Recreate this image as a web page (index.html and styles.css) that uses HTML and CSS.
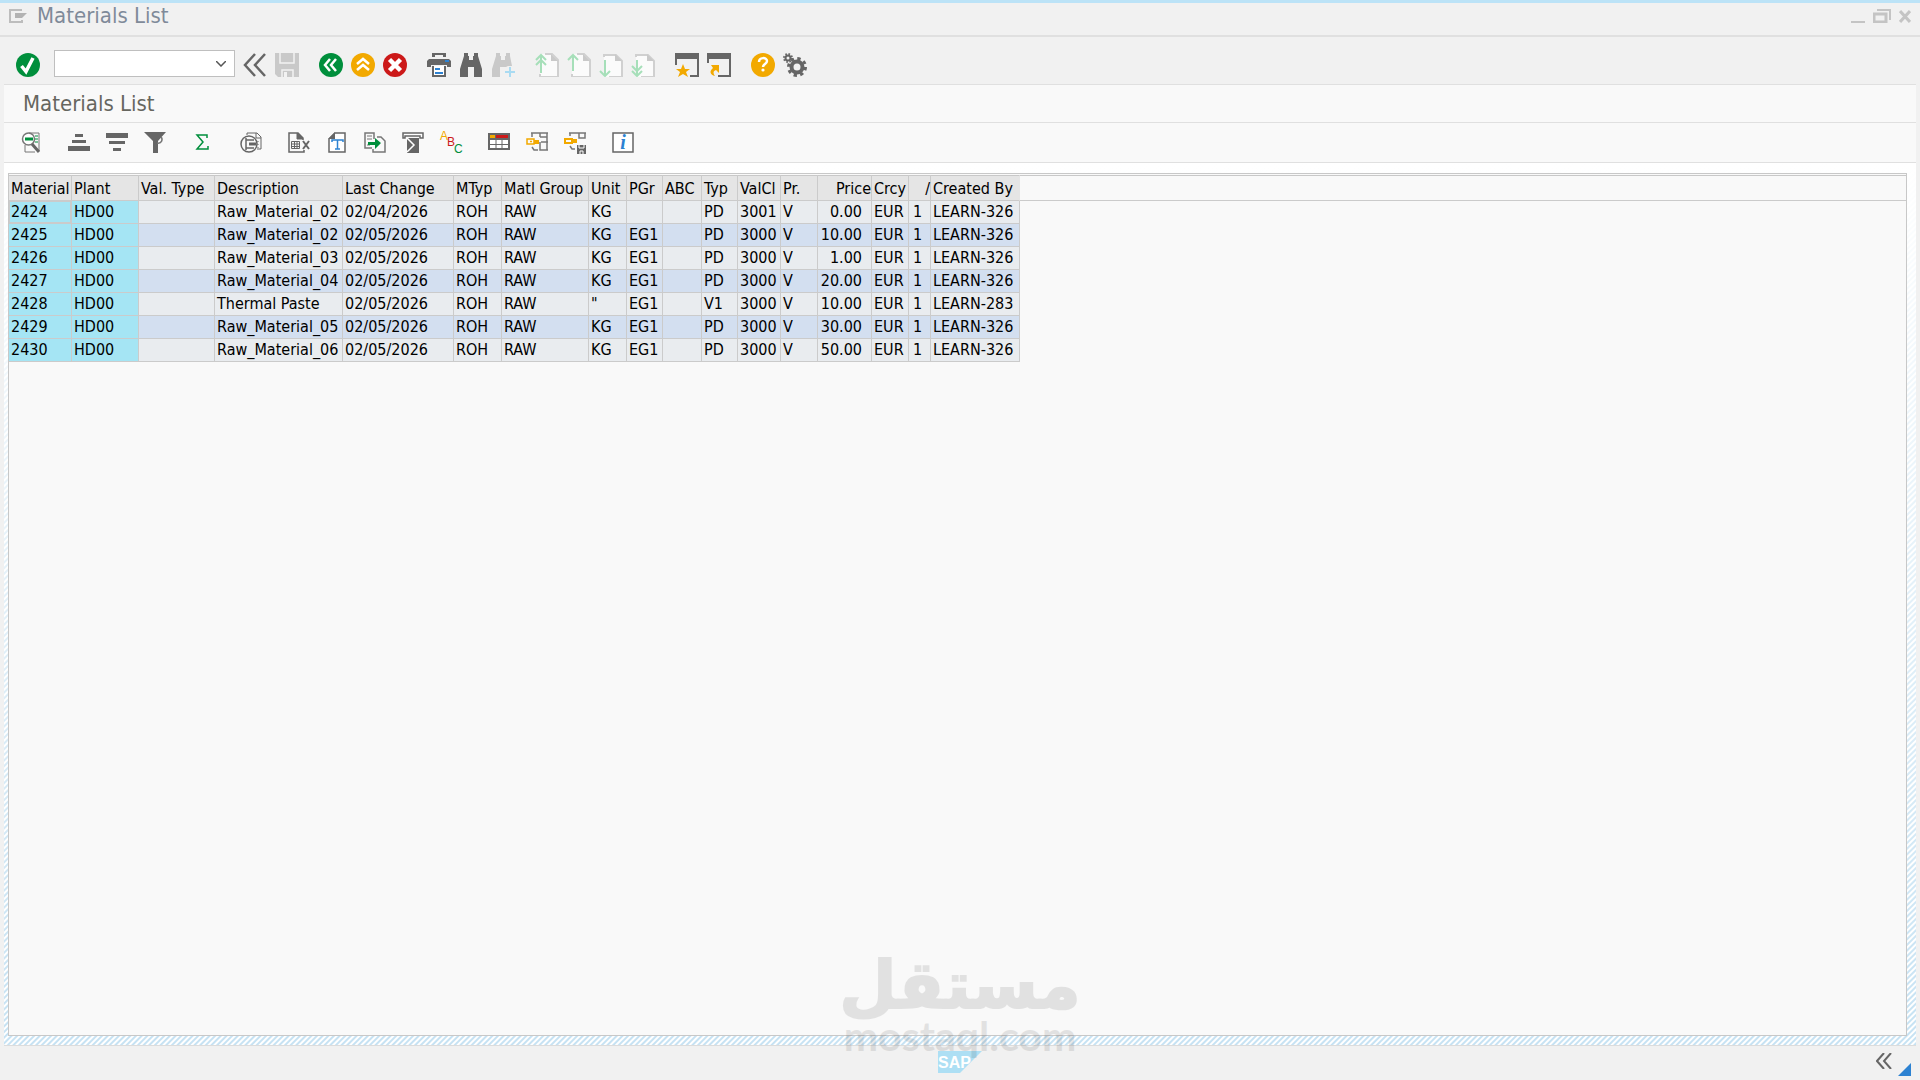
FILE: index.html
```html
<!DOCTYPE html>
<html lang="en">
<head>
    <meta charset="UTF-8">
    <meta name="viewport" content="width=device-width, initial-scale=1.0">
    <title>Materials List</title>
    <link rel="stylesheet" href="styles.css">
</head>
<body>
    <!-- Title Bar -->
    <header class="titlebar">
        <button class="icon-btn" aria-label="Menu">
            <svg width="18" height="14" viewBox="0 0 18 14"><path d="M13 1H1v12h12v-2" fill="none" stroke="#bdbdbd" stroke-width="2"/><path d="M6 4h12l-5 5H6z" fill="#b3b3b3"/></svg>
        </button>
        <span class="window-title">Materials List</span>
        <div class="window-controls">
            <button class="icon-btn" aria-label="Minimize">
                <svg width="14" height="14" viewBox="0 0 14 14"><path d="M0 13h14" stroke="#c4c4c4" stroke-width="2"/></svg>
            </button>
            <button class="icon-btn" aria-label="Restore">
                <svg width="18" height="14" viewBox="0 0 18 14" fill="none" stroke="#c4c4c4" stroke-width="2"><path d="M1 5h12v8H1z" stroke-width="3"/><path d="M4 1h13v10"/></svg>
            </button>
            <button class="icon-btn" aria-label="Close">
                <svg width="12" height="14" viewBox="0 0 12 14"><path d="M1 2l10 11M11 2L1 13" stroke="#c4c4c4" stroke-width="3"/></svg>
            </button>
        </div>
    </header>

    <!-- System Toolbar -->
    <div class="system-bar">
        <button class="icon-btn" aria-label="Enter">
            <svg width="24" height="24" viewBox="0 0 24 24"><circle cx="12" cy="12" r="12" fill="#008f3c"/><path d="M5.500 13l4.500 5.500L17 5" fill="none" stroke="#fff" stroke-width="3.500"/></svg>
        </button>
        <div class="command">
            <input type="text" aria-label="Command">
            <svg width="10" height="6" viewBox="0 0 10 6"><path d="M0 0l5 5 5-5" fill="none" stroke="#555" stroke-width="1.500"/></svg>
        </div>
        <div class="group">
            <button class="icon-btn" aria-label="Collapse">
                <svg width="24" height="24" viewBox="0 0 24 24"><path d="M12 1L2 12l10 11M22 1L12 12l10 11" fill="none" stroke="#666" stroke-width="2.500"/></svg>
            </button>
            <button class="icon-btn" aria-label="Save" disabled>
                <svg width="24" height="24" viewBox="0 0 24 24"><path d="M0 0h24v24H3l-3-3z" fill="#c9c9c9"/><path d="M5 0v10h14V0M7 24v-7h11v7" fill="none" stroke="#f2f2f2" stroke-width="1.500"/><path d="M9 19h3v5H9z" fill="#f2f2f2"/></svg>
            </button>
        </div>
        <div class="group">
            <button class="icon-btn" aria-label="Back">
                <svg width="24" height="24" viewBox="0 0 24 24"><circle cx="12" cy="12" r="12" fill="#008f3c"/><path d="M11 6l-5 6 5 6M17 6l-5 6 5 6" fill="none" stroke="#fff" stroke-width="2.500"/></svg>
            </button>
            <button class="icon-btn" aria-label="Exit">
                <svg width="24" height="24" viewBox="0 0 24 24"><circle cx="12" cy="12" r="12" fill="#f2a900"/><path d="M6 11l6-5 6 5M6 17l6-5 6 5" fill="none" stroke="#fff" stroke-width="2.500"/></svg>
            </button>
            <button class="icon-btn" aria-label="Cancel">
                <svg width="24" height="24" viewBox="0 0 24 24"><circle cx="12" cy="12" r="12" fill="#cc1919"/><path d="M6.500 6.500l11 11M17.500 6.500l-11 11" stroke="#fff" stroke-width="4.500"/></svg>
            </button>
        </div>
        <div class="group">
            <button class="icon-btn" aria-label="Print">
                <svg width="24" height="24" viewBox="0 0 24 24"><path d="M5 4V0h14v4h-3V2H8v2zM2 6h20l2 2v6h-4v-2H4v2H0V8z" fill="#666"/><path d="M18 7h4v2h-4z" fill="#2d82d2"/><path d="M6 13v10h12V13" fill="#fff" stroke="#666" stroke-width="2"/><path d="M8 16h5M8 20h8" stroke="#2d82d2" stroke-width="2"/></svg>
            </button>
            <button class="icon-btn" aria-label="Find">
                <svg width="24" height="24" viewBox="0 0 24 24"><path d="M5 0h4v3h1v4h4V3h1V0h4v3l4 13v8h-8v-10H9v10H1v-8L5 3z" fill="#666"/></svg>
            </button>
            <button class="icon-btn" aria-label="Find next" disabled>
                <svg width="24" height="24" viewBox="0 0 24 24"><path d="M5 0h4v3h1v4h4V3h1V0h4v3l2 10h-4l-2 1H9v10H1v-8L5 3z" fill="#c9c9c9"/><path d="M19 14v10M14 19h10" stroke="#a9dbf2" stroke-width="2"/></svg>
            </button>
        </div>
        <div class="group">
            <button class="icon-btn" aria-label="First page" disabled>
                <svg width="24" height="24" viewBox="0 0 24 24"><path d="M5 1h12l6 6v17H5z" fill="#fbfbfb"/><path d="M10 1h7l6 6v17H5v-3" fill="none" stroke="#d0d0d0" stroke-width="2"/><path d="M16 1v7h7z" fill="#c9c9c9"/><path d="M6 20V2M1 7l5-5 5 5M1 12l5-5 5 5" fill="none" stroke="#a6dfb9" stroke-width="2"/></svg>
            </button>
            <button class="icon-btn" aria-label="Previous page" disabled>
                <svg width="24" height="24" viewBox="0 0 24 24"><path d="M5 1h12l6 6v17H5z" fill="#fbfbfb"/><path d="M10 1h7l6 6v17H5v-3" fill="none" stroke="#d0d0d0" stroke-width="2"/><path d="M16 1v7h7z" fill="#c9c9c9"/><path d="M6 18V2M1 7l5-5 5 5" fill="none" stroke="#a6dfb9" stroke-width="2"/></svg>
            </button>
            <button class="icon-btn" aria-label="Next page" disabled>
                <svg width="24" height="24" viewBox="0 0 24 24"><path d="M5 1h12l6 6v17H5z" fill="#fbfbfb"/><path d="M5 4V2h12l6 6v16H10" fill="none" stroke="#d0d0d0" stroke-width="2"/><path d="M16 1v7h7z" fill="#c9c9c9"/><path d="M6 7v16M1 18l5 5 5-5" fill="none" stroke="#a6dfb9" stroke-width="2"/></svg>
            </button>
            <button class="icon-btn" aria-label="Last page" disabled>
                <svg width="24" height="24" viewBox="0 0 24 24"><path d="M5 1h12l6 6v17H5z" fill="#fbfbfb"/><path d="M5 4V2h12l6 6v16H10" fill="none" stroke="#d0d0d0" stroke-width="2"/><path d="M16 1v7h7z" fill="#c9c9c9"/><path d="M6 7v16M1 18l5 5 5-5M1 13l5 5 5-5" fill="none" stroke="#a6dfb9" stroke-width="2"/></svg>
            </button>
        </div>
        <div class="group">
            <button class="icon-btn" aria-label="New session">
                <svg width="24" height="24" viewBox="0 0 24 24"><path d="M0 0h24v24H15v-2h7V6H2v6H0z" fill="#666"/><path d="M8 11l2 5h5l-4 3 2 5-5-3-5 3 2-5-4-3h5z" fill="#f2a900"/></svg>
            </button>
            <button class="icon-btn" aria-label="Create shortcut">
                <svg width="24" height="24" viewBox="0 0 24 24"><path d="M0 0h24v24H11v-2h11V6H2v4H0z" fill="#666"/><path d="M4 12h8v8l-3-3c-3 1-3 3-1 6-5-1-6-5-2-8z" fill="#f2a900"/></svg>
            </button>
        </div>
        <div class="group">
            <button class="icon-btn" aria-label="Help">
                <svg width="24" height="24" viewBox="0 0 24 24"><circle cx="12" cy="12" r="12" fill="#f2a900"/><path d="M8 9c0-5 8-5 8-1 0 3-4 3-4 6" fill="none" stroke="#fff" stroke-width="2.500"/><circle cx="12" cy="17" r="1.600" fill="#fff"/></svg>
            </button>
            <button class="icon-btn" aria-label="Customize layout">
                <svg width="24" height="24" viewBox="0 0 24 24" fill="none" stroke="#666"><circle cx="14" cy="14" r="5.500" stroke-width="4"/><circle cx="14" cy="14" r="8.500" stroke-width="3" stroke-dasharray="3.340 3.340"/><circle cx="5" cy="5" r="2.500" stroke-width="2"/><circle cx="5" cy="5" r="4" stroke-width="2" stroke-dasharray="1.570 1.570"/></svg>
            </button>
        </div>
    </div>

    <main class="screen">
        <h1>Materials List</h1>

        <!-- List Toolbar -->
        <div class="list-bar">
            <button class="icon-btn" aria-label="Details">
                <svg width="22" height="22" viewBox="0 0 22 22"><path d="M9 1h10v18M5 13v7h10" fill="none" stroke="#777"/><path d="M15 4h3M15 7h3M15 10h3" stroke="#008f3c"/><circle cx="8.500" cy="7" r="6" fill="#fff" stroke="#777" stroke-width="1.500"/><path d="M5 7h8" stroke="#008f3c" stroke-width="3"/><path d="M12 12l7 8" stroke="#666" stroke-width="3"/></svg>
            </button>
            <div class="group">
                <button class="icon-btn" aria-label="Sort ascending">
                    <svg width="22" height="22" viewBox="0 0 22 22"><path d="M7 2h8v3H7zM4 8h14v3H4zM0 14h22v5H0z" fill="#666"/></svg>
                </button>
                <button class="icon-btn" aria-label="Sort descending">
                    <svg width="22" height="22" viewBox="0 0 22 22"><path d="M0 1h22v5H0zM3 9h16v3H3zM7 16h8v3H7z" fill="#666"/></svg>
                </button>
                <button class="icon-btn" aria-label="Filter">
                    <svg width="22" height="22" viewBox="0 0 22 22"><path d="M0 0h22l-8 9v12H9V9z" fill="#666"/><path d="M17 5c2 2 1 7-4 6" fill="none" stroke="#777" stroke-width="1.500"/></svg>
                </button>
            </div>
            <button class="icon-btn" aria-label="Total">
                <svg width="22" height="22" viewBox="0 0 22 22"><path d="M15 6V3H5l6 7-6 7h11v-3" fill="none" stroke="#008f3c" stroke-width="1.500"/></svg>
            </button>
            <button class="icon-btn" aria-label="Print preview">
                <svg width="22" height="22" viewBox="0 0 22 22" fill="none" stroke="#666"><path d="M7 3V1h10l4 4v12h-4"/><path d="M16 1v5h5"/><circle cx="9" cy="12" r="8" stroke-width="1.500"/><path d="M6 6v12M6 8h8M6 16h8" stroke-width="1.500"/><path d="M9 12h7" stroke-width="3"/><path d="M18 9v7" stroke-dasharray="1 2"/></svg>
            </button>
            <div class="group">
                <button class="icon-btn" aria-label="Spreadsheet">
                    <svg width="22" height="22" viewBox="0 0 22 22" fill="none" stroke="#666"><path d="M16 18v2H1V1h9l5 5v2" stroke-width="1.500"/><path d="M9 1v6h6z" fill="#666"/><path d="M3.500 9.500h8v7h-8zM3.500 12h8M3.500 14.500h8M6.500 9v8M9 9v8"/><path d="M15 9l6 8M21 9l-6 8" stroke-width="2"/></svg>
                </button>
                <button class="icon-btn" aria-label="Word processing">
                    <svg width="22" height="22" viewBox="0 0 22 22"><path d="M9 1h10v19H3V7z" fill="#fff" stroke="#666" stroke-width="1.500"/><path d="M9 0v7H2z" fill="#666"/><path d="M6 10V8h11v2M11.500 8v9M9 17h5" fill="none" stroke="#2d82d2" stroke-width="1.500"/></svg>
                </button>
                <button class="icon-btn" aria-label="Local file">
                    <svg width="22" height="22" viewBox="0 0 22 22"><path d="M8 16H1V1h9v6M13 5h4l4 4v11H9v-3" fill="none" stroke="#777" stroke-width="1.500"/><path d="M3 4h5M3 7h5M3 13h3" stroke="#777"/><path d="M4 10h7V6l6 5-6 6v-4H4z" fill="#008f3c"/></svg>
                </button>
                <button class="icon-btn" aria-label="Mail recipient">
                    <svg width="22" height="22" viewBox="0 0 22 22"><path d="M1 6V1h20v5h-3V4H3v2z" fill="#fff" stroke="#666" stroke-width="1.500"/><path d="M5 6h12v15H5z" fill="#666"/><path d="M5 6l7 7-7 7" fill="none" stroke="#fff" stroke-width="1.500"/></svg>
                </button>
                <button class="icon-btn" aria-label="ABC analysis">
                    <svg class="abc" width="22" height="22" viewBox="0 0 22 22"><text x="0" y="8" fill="#f2a900">A</text><text x="7" y="14" fill="#cc1919">B</text><text x="14" y="21" fill="#008f3c">C</text></svg>
                </button>
            </div>
            <div class="group">
                <button class="icon-btn" aria-label="Change layout">
                    <svg width="22" height="22" viewBox="0 0 22 22"><path d="M1 2h20v15H1z" fill="#fff" stroke="#666" stroke-width="2"/><path d="M0 1h22v7H0z" fill="#666"/><path d="M2 3h5v3H2z" fill="#f2a900"/><path d="M8 3h12v3H8z" fill="#cc1919"/><path d="M1 12.500h20M8 8v9M14 8v9" stroke="#666"/></svg>
                </button>
                <button class="icon-btn" aria-label="Select layout">
                    <svg width="22" height="22" viewBox="0 0 22 22" fill="none"><path d="M5 1h17M6 1v4M14 5V1M21 1v17M14 5h7M15 10h7M14 10v8h8M6 15l2 3h4" stroke="#777" stroke-width="1.500"/><path d="M1 7h7v5H1zM4 9.500h2" stroke="#f2a900" stroke-width="1.500"/><path d="M8 8h5v4H8z" fill="#f2a900"/></svg>
                </button>
                <button class="icon-btn" aria-label="Save layout">
                    <svg width="22" height="22" viewBox="0 0 22 22" fill="none"><path d="M5 1h17M6 1v3M15 1v5h6V1M6 14l2 3h3" stroke="#777" stroke-width="1.500"/><path d="M1 7h7v4H1z" stroke="#f2a900" stroke-width="2"/><path d="M8 7h5v4H8z" fill="#f2a900"/><path d="M13 13h9v9h-9z" fill="#666"/><path d="M15 13v3h5v-3M16 22v-3h3v3" stroke="#fff"/></svg>
                </button>
            </div>
            <button class="icon-btn" aria-label="Information">
                <svg class="info" width="22" height="22" viewBox="0 0 22 22"><path d="M1 1h20v19H1z" fill="#fff" stroke="#666" stroke-width="1.500"/><text x="11" y="17" text-anchor="middle" fill="#2d82d2">i</text></svg>
            </button>
        </div>

        <div class="content">
            <div class="grid">
                <table>
                    <colgroup>
                        <col class="c-material"><col class="c-plant"><col class="c-valtype"><col class="c-desc"><col class="c-date">
                        <col class="c-mtyp"><col class="c-group"><col class="c-unit"><col class="c-pgr"><col class="c-abc">
                        <col class="c-typ"><col class="c-valcl"><col class="c-pr"><col class="c-price"><col class="c-crcy">
                        <col class="c-per"><col class="c-user"><col>
                    </colgroup>
                    <thead>
                        <tr>
                            <th>Material</th><th>Plant</th><th>Val. Type</th><th>Description</th><th>Last Change</th><th>MTyp</th><th>Matl Group</th><th>Unit</th><th>PGr</th><th>ABC</th><th>Typ</th><th>ValCl</th><th>Pr.</th><th class="right">Price</th><th>Crcy</th><th class="right">/</th><th class="last">Created By</th><td class="filler"></td>
                        </tr>
                    </thead>
                    <tbody>
                        <tr><td class="key selected">2424</td><td class="key">HD00</td><td></td><td>Raw_Material_02</td><td>02/04/2026</td><td>ROH</td><td>RAW</td><td>KG</td><td></td><td></td><td>PD</td><td>3001</td><td>V</td><td class="num">0.00</td><td>EUR</td><td class="per">1</td><td>LEARN-326</td></tr>
                        <tr><td class="key">2425</td><td class="key">HD00</td><td></td><td>Raw_Material_02</td><td>02/05/2026</td><td>ROH</td><td>RAW</td><td>KG</td><td>EG1</td><td></td><td>PD</td><td>3000</td><td>V</td><td class="num">10.00</td><td>EUR</td><td class="per">1</td><td>LEARN-326</td></tr>
                        <tr><td class="key">2426</td><td class="key">HD00</td><td></td><td>Raw_Material_03</td><td>02/05/2026</td><td>ROH</td><td>RAW</td><td>KG</td><td>EG1</td><td></td><td>PD</td><td>3000</td><td>V</td><td class="num">1.00</td><td>EUR</td><td class="per">1</td><td>LEARN-326</td></tr>
                        <tr><td class="key">2427</td><td class="key">HD00</td><td></td><td>Raw_Material_04</td><td>02/05/2026</td><td>ROH</td><td>RAW</td><td>KG</td><td>EG1</td><td></td><td>PD</td><td>3000</td><td>V</td><td class="num">20.00</td><td>EUR</td><td class="per">1</td><td>LEARN-326</td></tr>
                        <tr><td class="key">2428</td><td class="key">HD00</td><td></td><td>Thermal Paste</td><td>02/05/2026</td><td>ROH</td><td>RAW</td><td>"</td><td>EG1</td><td></td><td>V1</td><td>3000</td><td>V</td><td class="num">10.00</td><td>EUR</td><td class="per">1</td><td>LEARN-283</td></tr>
                        <tr><td class="key">2429</td><td class="key">HD00</td><td></td><td>Raw_Material_05</td><td>02/05/2026</td><td>ROH</td><td>RAW</td><td>KG</td><td>EG1</td><td></td><td>PD</td><td>3000</td><td>V</td><td class="num">30.00</td><td>EUR</td><td class="per">1</td><td>LEARN-326</td></tr>
                        <tr><td class="key">2430</td><td class="key">HD00</td><td></td><td>Raw_Material_06</td><td>02/05/2026</td><td>ROH</td><td>RAW</td><td>KG</td><td>EG1</td><td></td><td>PD</td><td>3000</td><td>V</td><td class="num">50.00</td><td>EUR</td><td class="per">1</td><td>LEARN-326</td></tr>
                    </tbody>
                </table>
            </div>
        </div>
    </main>

    <!-- Status Bar -->
    <footer class="statusbar">
        <svg class="sap" width="44" height="22" viewBox="0 0 44 22"><path d="M0 0h44L22 22H0z" fill="#addff4"/><text x="0" y="17" fill="#fff">SAP</text></svg>
        <div class="status-right">
            <button class="icon-btn" aria-label="Show status fields">
                <svg width="16" height="16" viewBox="0 0 16 16"><path d="M8 0L1 8l7 8M15 0L8 8l7 8" fill="none" stroke="#666" stroke-width="2"/></svg>
            </button>
            <svg class="grip" width="13" height="13" viewBox="0 0 13 13"><path d="M13 0v13H0z" fill="#2d82d2"/></svg>
        </div>
    </footer>

    <div class="watermark">
        <span class="mark-ar" lang="ar" dir="rtl">مستقل</span>
        <span class="mark-en">mostaql.com</span>
    </div>
</body>
</html>
```
FILE: styles.css
```css
* {
    margin: 0;
    padding: 0;
    box-sizing: border-box;
}

body {
    position: relative;
    display: flex;
    flex-direction: column;
    min-height: 100vh;
    background: #f1f1f1;
    color: #000;
    font-family: Tahoma, "DejaVu Sans Condensed", "DejaVu Sans", sans-serif;
    font-size: 16px;
    overflow: hidden;
}

svg {
    display: block;
}

.icon-btn {
    display: block;
    background: none;
    border: none;
    cursor: pointer;
}

.icon-btn:disabled {
    cursor: default;
}

.group {
    display: flex;
}

/* Title Bar */
.titlebar {
    display: flex;
    align-items: center;
    gap: 10px;
    height: 37px;
    padding: 0 9px 6px;
    border-top: 3px solid #bce3f7;
    border-bottom: 2px solid #e0e0e0;
}

.window-title {
    font-size: 22px;
    line-height: 26px;
    color: #7f8a99;
}

.window-controls {
    display: flex;
    gap: 8px;
    margin-left: auto;
}

/* System Toolbar */
.system-bar {
    display: flex;
    align-items: center;
    gap: 20px;
    height: 47px;
    padding: 9px 16px 0;
}

.system-bar .group {
    gap: 8px;
}

.command {
    display: flex;
    align-items: center;
    width: 181px;
    height: 27px;
    margin: 0 -12px 3px -6px;
    padding-right: 8px;
    background: #fff;
    border: 1px solid #bfbfbf;
}

.command input {
    flex: 1;
    min-width: 0;
    height: 100%;
    padding: 0 4px;
    border: none;
    outline: none;
    background: none;
    font: inherit;
}

/* Main Screen */
.screen {
    flex: 1;
    display: flex;
    flex-direction: column;
    margin: 0 4px;
}

h1 {
    height: 38px;
    padding-left: 19px;
    border-top: 1px solid #e0e0e0;
    background: #f9f9f9;
    font-size: 22px;
    font-weight: normal;
    line-height: 38px;
    color: #66665f;
}

.list-bar {
    display: flex;
    align-items: center;
    gap: 26px;
    height: 41px;
    padding: 0 16px;
    border-top: 1px solid #e0e0e0;
    border-bottom: 1px solid #e0e0e0;
    background: #f9f9f9;
}

.list-bar .group {
    gap: 16px;
}

.abc {
    overflow: visible;
}

.abc text {
    font-family: "Liberation Sans", sans-serif;
    font-size: 12px;
}

.info {
    overflow: visible;
}

.info text {
    font-family: "Liberation Serif", serif;
    font-size: 20px;
    font-style: italic;
    font-weight: bold;
}

.content {
    flex: 1;
    display: flex;
    padding: 10px 9px 9px 4px;
    border-bottom: 1px solid #dcdcdc;
    background:
        linear-gradient(#fff, rgba(255, 255, 255, 0)),
        repeating-linear-gradient(135deg, #fff 0, #fff 1px, #c6e2f3 2px, #c6e2f3 3px, #fff 4px);
}

.grid {
    flex: 1;
    padding-top: 1px;
    border: 1px solid #c8c8c8;
    background: #f9f9f9;
}

/* Materials Table */
table {
    width: 100%;
    table-layout: fixed;
    border-spacing: 0;
}

th, td {
    height: 23px;
    padding: 0 0 0 2px;
    border-right: 1px solid #cbcbcb;
    border-bottom: 1px solid #cbcbcb;
    line-height: 20px;
    text-align: left;
    white-space: nowrap;
}

th {
    height: 26px;
    padding-top: 2px;
    border-top: 1px solid #c8c8c8;
    background: #e5e5e5;
    font-weight: normal;
}

td {
    background: #e9ecef;
}

tr:nth-child(even) td {
    background: #d3dff0;
}

tbody tr .key,
tbody tr:nth-child(even) .key {
    background: #a5e5f4;
}

.key.selected {
    box-shadow: inset 0 0 0 1px #cbcbcb;
}

.right {
    text-align: right;
}

.num {
    padding-right: 9px;
    text-align: right;
}

.per {
    padding-left: 4px;
}

.last {
    border-right-color: #e5e5e5;
}

thead .filler {
    border-top: 1px solid #c8c8c8;
    border-right: none;
    background: none;
}

.c-material { width: 63px; }
.c-plant { width: 67px; }
.c-valtype { width: 76px; }
.c-desc { width: 128px; }
.c-date { width: 111px; }
.c-mtyp { width: 48px; }
.c-group { width: 87px; }
.c-unit { width: 38px; }
.c-pgr { width: 36px; }
.c-abc { width: 39px; }
.c-typ { width: 36px; }
.c-valcl { width: 43px; }
.c-pr { width: 37px; }
.c-price { width: 54px; }
.c-crcy { width: 37px; }
.c-per { width: 22px; }
.c-user { width: 89px; }

/* Status Bar */
.statusbar {
    display: grid;
    grid-template-columns: 1fr auto 1fr;
    height: 34px;
    padding: 5px 9px 0;
}

.sap {
    grid-column: 2;
}

.sap text {
    font-family: "Liberation Sans", sans-serif;
    font-size: 16px;
    font-weight: bold;
}

.status-right {
    display: flex;
    justify-content: flex-end;
    align-items: flex-start;
    gap: 6px;
    padding: 2px 0 4px;
}

.grip {
    align-self: flex-end;
}

/* Watermark */
.watermark {
    position: absolute;
    left: 0;
    right: 0;
    bottom: 24px;
    display: flex;
    flex-direction: column;
    align-items: center;
    color: #000;
    opacity: 0.09;
    pointer-events: none;
}

.mark-ar {
    height: 66px;
    font-family: "DejaVu Sans", sans-serif;
    font-size: 66px;
    font-weight: bold;
    line-height: 72px;
    -webkit-text-stroke: 2px #000;
}

.mark-en {
    font-family: Lato, sans-serif;
    font-size: 41px;
    font-weight: bold;
    line-height: 40px;
}
```
